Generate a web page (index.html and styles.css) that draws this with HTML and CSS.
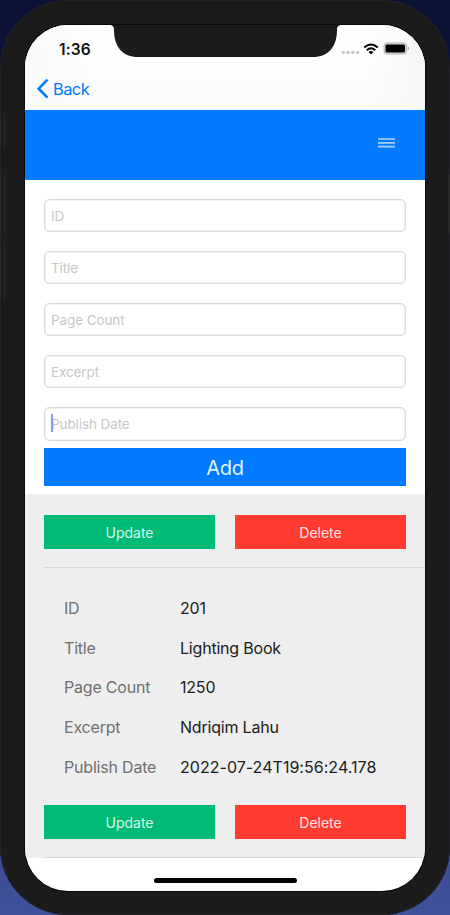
FILE: index.html
```html
<!DOCTYPE html>
<html lang="en">
<head>
<meta charset="utf-8">
<meta name="viewport" content="width=device-width">
<title>Books</title>
<link rel="stylesheet" href="styles.css">
</head>
<body>
<div class="phone">
  <i class="side side-mute"></i><i class="side side-up"></i><i class="side side-down"></i><i class="side side-power"></i>
  <main class="screen">
    <svg class="notch" width="234" height="33" viewBox="0 0 234 33" aria-hidden="true"><path d="M0 0C3.500 0 5 1.500 5 5C5 22 14 32 29 32H204C219 32 228 22 228 5C228 1.500 229.500 0 233 0Z" fill="#1b1b1b"/></svg>
    <header class="top">
      <div class="status">
        <span class="time">1:36</span>
        <div class="indicators">
          <svg class="dots" width="20" height="5" viewBox="0 0 20 5"><g fill="#c9c9c9"><circle cx="2.300" cy="2.500" r="1.700"/><circle cx="7.100" cy="2.500" r="1.700"/><circle cx="11.900" cy="2.500" r="1.700"/><circle cx="16.700" cy="2.500" r="1.700"/></g></svg>
          <svg class="wifi" width="16" height="12" viewBox="0 0 16 12"><g fill="none" stroke="#080808" stroke-width="2"><path d="M1.200 4.500Q8 -1.500 14.800 4.500"/><path d="M3.700 7.200Q8 3.300 12.300 7.200"/></g><path d="M5.500 9Q8 7 10.500 9L8 11.600Z" fill="#080808"/></svg>
          <svg class="battery" width="27" height="13" viewBox="0 0 27 13"><rect x="1" y="1" width="22.500" height="11" rx="3" fill="#ddd" stroke="#b5b5b5"/><rect x="2.500" y="2.400" width="19.500" height="8.200" rx="1.500" fill="#000"/><path d="M24.700 4.500Q26.200 5 26.200 6.500T24.700 8.500Z" fill="#b5b5b5"/></svg>
        </div>
      </div>
      <div class="back">
        <svg width="13" height="22" viewBox="0 0 13 22"><path d="M11.500 1.700L2.700 10.700L11.500 19.700" fill="none" stroke="#007aff" stroke-width="2.600"/></svg>
        <span>Back</span>
      </div>
    </header>
    <div class="bar">
      <svg width="17" height="11" viewBox="0 0 17 11"><path d="M0 2H17M0 5.800H17M0 9.600H17" stroke="#a9d1ff" stroke-width="1.700"/></svg>
    </div>
    <section class="form">
      <div class="field">ID</div>
      <div class="field">Title</div>
      <div class="field">Page Count</div>
      <div class="field">Excerpt</div>
      <div class="field active">Publish Date</div>
      <div class="add">Add</div>
    </section>
    <section class="list">
      <div class="actions"><div class="btn update">Update</div><div class="btn delete">Delete</div></div>
      <div class="divider"></div>
      <dl class="details">
        <dt>ID</dt><dd>201</dd>
        <dt>Title</dt><dd>Lighting Book</dd>
        <dt>Page Count</dt><dd>1250</dd>
        <dt>Excerpt</dt><dd>Ndriqim Lahu</dd>
        <dt>Publish Date</dt><dd class="date">2022-07-24T19:56:24.178</dd>
      </dl>
      <div class="actions"><div class="btn update">Update</div><div class="btn delete">Delete</div></div>
      <div class="divider"></div>
    </section>
    <div class="home"></div>
  </main>
</div>
</body>
</html>
```
FILE: styles.css
```css
* { box-sizing: border-box; }
body {
  margin: 0;
  height: 915px;
  overflow: hidden;
  background: linear-gradient(#0b1235, #111a4a 40%, #40529c);
  font-family: Inter, "Liberation Sans", sans-serif;
}
.phone {
  position: relative;
  height: 915px;
  padding: 25px 25px 24px;
  border-radius: 68px;
  background: #1b1b1b;
  box-shadow: inset 0 0 0 1px #22232a;
}
.side {
  position: absolute;
  left: 0;
  width: 5px;
  border-right: 1px solid #292929;
  border-left: 1px solid #292929;
}
.side-mute { top: 114px; height: 34px; }
.side-up { top: 175px; height: 59px; }
.side-down { top: 242px; height: 58px; }
.side-power { left: auto; right: 0; top: 175px; width: 1px; height: 59px; }
.screen {
  position: relative;
  height: 866px;
  overflow: hidden;
  border-radius: 43px;
  background: #fff;
  box-shadow: 0 0 0 1px #090909;
}
.notch { position: absolute; left: 84px; top: 0; }
.top {
  height: 85px;
  background: linear-gradient(90deg, #f8f9f9, transparent 18%, transparent 85%, #f5f7f7), linear-gradient(#fff, #fafcfc);
}
.status {
  display: flex;
  justify-content: space-between;
  height: 48px;
  padding: 0 15px 0 34px;
  align-items: center;
}
.time { font-size: 15.500px; font-weight: 600; letter-spacing: .1px; color: #111; }
.indicators { display: flex; align-items: center; padding-bottom: 1px; }
.dots { margin: 8px 2px 0 0; }
.wifi { margin-right: 4px; }
.back {
  display: flex;
  align-items: center;
  height: 32px;
  padding-left: 11px;
  gap: 4px;
  color: #007aff;
  font-size: 16.500px;
  letter-spacing: -.6px;
}
.bar {
  display: flex;
  justify-content: flex-end;
  height: 69.600px;
  padding: 27px 30px 0;
  background: #007aff;
}
.form { height: 314.400px; padding: 19px 19px 0; }
.field {
  height: 33.200px;
  margin-bottom: 19px;
  padding-left: 6px;
  border: 1px solid #dadada;
  border-radius: 5px;
  box-shadow: inset 0 0 0 1px #f1f1f1;
  color: #c7c7c9;
  font-size: 13.500px;
  line-height: 32px;
  letter-spacing: -.1px;
}
.active { position: relative; margin-bottom: 7px; }
.active::before {
  content: "";
  position: absolute;
  left: 6px;
  top: 6px;
  width: 2px;
  height: 18px;
  background: #8497f5;
}
.add {
  height: 38px;
  background: #007aff;
  color: #e5f2ff;
  font-size: 20px;
  line-height: 40px;
  text-align: center;
  letter-spacing: -.2px;
}
.list { height: 364px; padding-top: 21px; background: #eee; }
.actions {
  display: grid;
  grid-template-columns: 1fr 1fr;
  gap: 20px;
  padding: 0 19px;
}
.btn {
  height: 34px;
  font-size: 14px;
  line-height: 35px;
  text-align: center;
}
.update { background: #00bb76; color: #d9f6eb; }
.delete { background: #ff3b30; color: #ffe2e0; }
.divider { height: 1px; margin: 18px 0 0 19px; background: #d8d8d8; }
.details {
  display: grid;
  grid-template-columns: 116px 1fr;
  grid-auto-rows: 39.750px;
  margin: 20px 0 18.250px 39px;
  font-size: 16px;
  line-height: 40.500px;
  letter-spacing: -.2px;
}
dt { color: #707070; }
dd { margin: 0; color: #202020; }
.date { letter-spacing: .03px; }
.home {
  width: 143px;
  height: 5px;
  margin: 20px auto 0 129px;
  border-radius: 3px;
  background: #000;
}
```
